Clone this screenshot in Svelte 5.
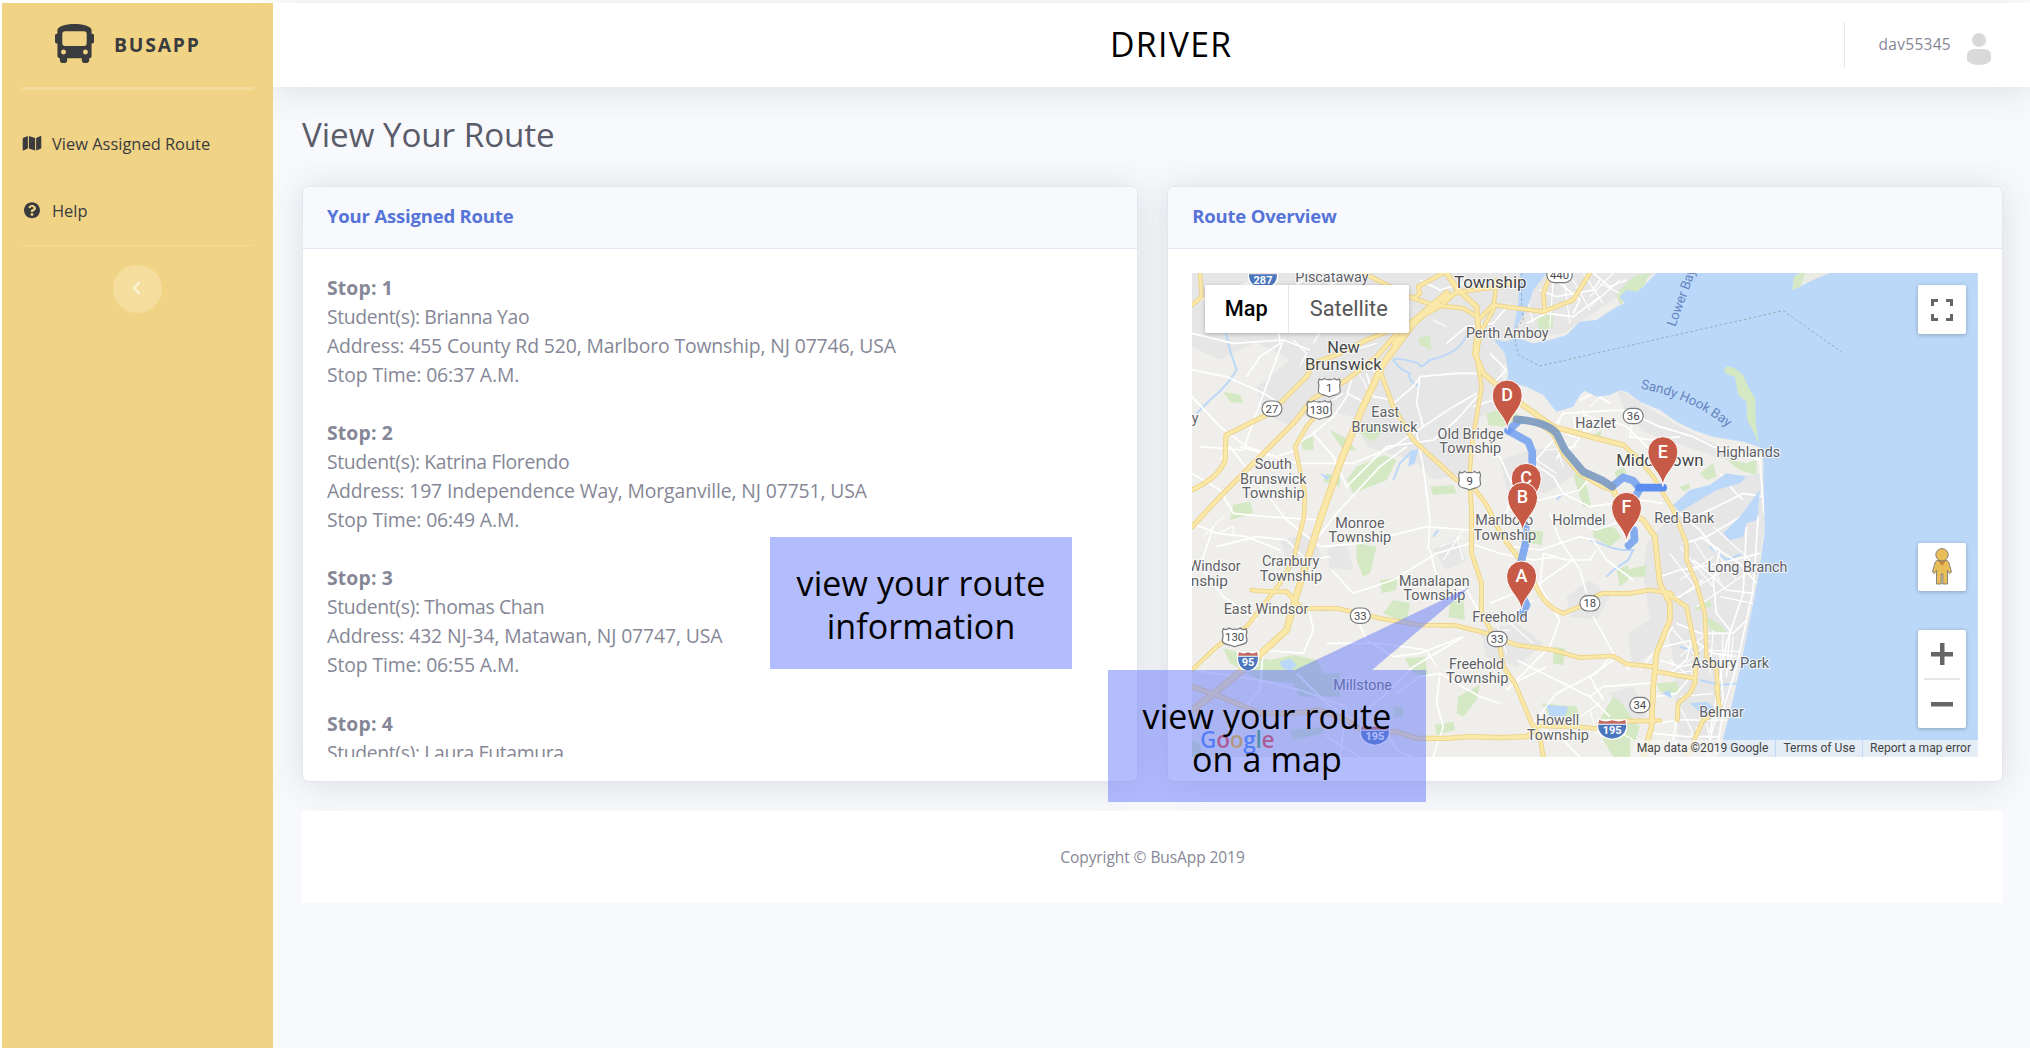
<script>
  const stops = [
    { n: 1, student: 'Brianna Yao', address: '455 County Rd 520, Marlboro Township, NJ 07746, USA', time: '06:37 A.M.' },
    { n: 2, student: 'Katrina Florendo', address: '197 Independence Way, Morganville, NJ 07751, USA', time: '06:49 A.M.' },
    { n: 3, student: 'Thomas Chan', address: '432 NJ-34, Matawan, NJ 07747, USA', time: '06:55 A.M.' },
    { n: 4, student: 'Laura Futamura', address: '', time: '' }
  ];

  // Map drawing uses three units per screen pixel.
  const urban = [
    'M36 39H330L560 39H1430L1300 120 1150 220 1040 240 960 330 1000 440 900 470 860 640 760 660 700 600 560 560 520 470 400 440 340 500 250 460 230 380 330 300 160 210 36 220Z',
    'M36 100 160 130 220 250 120 300 36 260Z',
    'M1310 385 1400 440 1500 500 1620 560 1700 590 1640 600 1520 560 1400 520 1340 470Z',
    'M1560 690 1650 650 1752 640 1752 800 1735 940 1700 1130 1600 1480 1500 1490 1480 1200 1440 960 1400 850 1500 740Z',
    'M1400 850 1460 940 1470 1040 1430 1170 1355 1220 1345 1120 1410 1080 1390 940Z',
    'M960 600 1050 570 1130 560 1190 640 1100 700 980 690Z',
    'M900 1110 1010 1090 1090 1150 1010 1220 920 1190Z',
    'M760 870 830 830 860 900 800 930Z',
    'M440 870 500 850 520 930 450 925Z',
    'M300 840 400 820 430 900 330 930Z',
    'M1160 1010 1230 960 1290 1010 1250 1080 1170 1070Z',
    'M1290 1300 1360 1280 1400 1370 1330 1400Z'
  ];
  const greens = [
    'M715 235 750 225 755 270 720 255Z',
    'M570 490 620 500 580 545 540 520Z',
    'M530 620 610 585 650 600 620 660 520 700 500 660Z',
    'M450 510 490 530 530 570 490 570Z',
    'M920 460 990 440 1020 470 970 500 925 495Z',
    'M750 680 820 675 830 700 760 705Z',
    'M160 735 210 725 220 760 150 780Z',
    'M130 395 180 405 190 430 150 425Z',
    'M360 540 400 530 400 570 370 570Z',
    'M440 640 480 650 480 680 430 665Z',
    'M1070 175 1120 155 1120 200 1080 215Z',
    'M1310 100 1360 50 1410 39 1390 80 1320 135Z',
    'M1180 645 1210 640 1235 740 1210 740Z',
    'M1050 810 1090 815 1085 855 1055 850Z',
    'M530 850 590 860 570 940 550 950 530 900Z',
    'M600 960 650 955 650 990 605 1000Z',
    'M610 1060 640 1020 690 1030 680 1090Z',
    'M810 1030 850 1010 855 1080 805 1070Z',
    'M130 1165 190 1180 270 1200 340 1185 410 1200 430 1240 480 1240 480 1310 360 1310 340 1270 240 1260 150 1210Z',
    'M675 1195 735 1190 745 1250 700 1240Z',
    'M835 1310 900 1275 890 1320 850 1370 830 1360Z',
    'M765 1395 820 1385 825 1410 770 1425Z',
    'M330 1410 430 1400 430 1420 340 1440Z',
    'M640 1340 670 1340 670 1370 640 1370Z',
    'M1085 1330 1190 1340 1200 1370 1110 1370Z',
    'M1120 1160 1155 1165 1150 1215 1120 1210Z',
    'M1260 1380 1300 1310 1325 1330 1360 1380 1380 1400 1350 1490 1300 1490 1270 1440Z',
    'M1240 810 1300 800 1325 830 1290 860 1240 830Z',
    'M1310 930 1345 915 1345 960 1320 980Z',
    'M1340 930 1400 915 1395 950 1350 950Z',
    'M1560 640 1600 610 1610 650 1580 660Z',
    'M1640 600 1700 610 1730 600 1730 645 1680 630Z',
    'M1500 680 1530 670 1530 685 1510 695Z',
    'M1545 1040 1590 1020 1595 1040 1550 1050Z',
    'M1580 1070 1630 1100 1640 1120 1590 1110Z',
    'M1430 1270 1490 1265 1500 1300 1440 1295Z',
    'M1305 635 1330 620 1340 640 1310 655Z',
    'M36 1440 60 1450 70 1491 36 1491Z',
    'M1250 520 1265 510 1262 530 1245 535Z'
  ];
  const inlets = [
    'M1480 735 1530 690 1590 675 1640 640 1700 650 1680 670 1610 690 1560 720 1500 755Z',
    'M1630 820 1680 770 1740 690 1735 760 1730 780 1700 790 1690 830 1650 840Z',
    'M1020 39 1100 39 1060 90 1040 150 1000 215 1015 130Z',
    'M420 1050 440 1045 430 1055Z',
    'M300 1205 330 1195 350 1215 330 1235 305 1220Z',
    'M690 580 715 565 705 610 685 620Z',
    'M1100 1335 1165 1340 1155 1370 1110 1370Z',
    'M1530 1330 1580 1325 1610 1350 1590 1380 1560 1355Z',
    'M1445 1300 1470 1290 1475 1315Z',
    'M420 640 450 650 440 660Z'
  ];
  const streams = [
    'M860 225Q840 280 750 300 720 330 715 310 650 290 640 300 660 330 690 340 680 360 720 380 740 380',
    'M125 130Q135 240 170 330 140 380 90 420L50 460',
    'M700 570 660 610 640 660',
    'M1230 840 1260 850 1300 865 1330 870 1360 870 1345 900 1300 930 1280 950',
    'M1560 1260 1620 1275 1680 1270M1590 860 1640 900 1690 880M1560 1180 1500 1160',
    'M1050 350 1045 345M760 830 775 810M1130 720 1150 700'
  ];
  const minor = [
    'M36 130 120 100 200 70 280 150 350 180M36 220 160 250 310 240 390 270',
    'M310 240 240 430 190 570 60 560M120 600 150 560 320 780 420 860',
    'M36 330 140 350 250 400 300 430M36 410 120 500 200 560 290 590 350 570',
    'M520 340 500 410 460 470 400 520 340 560M560 340 580 410 640 420',
    'M500 400 560 430 520 500M400 520 460 590 500 680 620 560 760 540',
    'M640 430 700 380 720 350 830 340 890 340M720 350 710 430 730 500 820 440 890 400',
    'M710 520 730 620 750 780 745 870M730 500 640 560 520 610 350 610 180 560',
    'M760 540 830 480 900 400M680 560 600 620 470 760 400 850',
    'M36 640 120 690 160 760 260 770 420 780M36 790 110 820 200 830 300 870',
    'M100 800 60 920 130 1010 230 1080M110 860 230 830 320 840 380 900 450 890',
    'M420 860 540 850 620 830 740 800 870 810M455 930 520 1000 640 960 770 880 870 850',
    'M750 870 770 950 860 990 900 1060M870 850 960 880 1060 900 1130 890',
    'M520 1050 560 1140 640 1190 720 1180 850 1130M440 1150 600 1150 740 1170 770 1220',
    'M385 1040 400 1110 370 1180 240 1170M36 1230 240 1260 360 1290 500 1340',
    'M250 1170 240 1290 170 1370 160 1440M350 1240 440 1330 520 1380 610 1310 700 1220 850 1130',
    'M500 1340 480 1491M440 1430 540 1491M650 1300 720 1250 780 1240 900 1310 960 1330',
    'M780 1240 770 1330 790 1400 760 1491M610 1400 650 1470 700 1491',
    'M1000 720 1080 720 1200 690 1240 640M870 560 960 590 1000 680 980 760',
    'M1000 680 1060 610 1120 540 1140 480M1060 610 1120 650 1150 700 1230 740 1300 730 1340 700',
    'M1130 490 1150 460 1240 455 1330 450 1440 500 1540 530 1600 560 1740 600 1752 760',
    'M1200 420 1240 400 1290 430M1210 450 1220 500 1180 560 1130 590M1140 510 1180 530 1260 500',
    'M1290 480 1340 500 1400 560 1470 600M1360 470 1350 530 1410 540 1500 530',
    'M1000 860 1080 870 1200 830 1240 840 1280 900 1360 960M1110 760 1140 840 1200 930 1220 1000',
    'M1170 780 1250 810 1330 780 1380 720 1450 730M1250 870 1230 900 1160 900 1090 880',
    'M1090 880 1080 980 1140 1080 1110 1160 1040 1230 980 1290M930 1030 1080 970 1180 900',
    'M1240 1070 1300 1180 1350 1230M1300 1180 1250 1240 1130 1300 1060 1390',
    'M1010 1200 1130 1260 1230 1310 1290 1370M1230 1310 1270 1280 1400 1270 1430 1270',
    'M980 1290 1020 1260 1100 1220M1060 1390 1150 1440 1200 1491M1300 1200 1230 1250 1270 1320',
    'M1440 950 1500 930 1620 910 1740 880M1500 760 1560 810 1600 860 1680 910 1730 970',
    'M1520 780 1610 740 1690 700 1750 710M1620 640 1660 690 1690 720M1510 850 1580 830 1650 790 1700 760',
    'M1540 900 1600 950 1640 990 1720 1000M1560 830 1620 870 1600 960 1610 1060 1650 1110 1640 1250',
    'M1460 1020 1500 1010 1570 960M1480 1100 1420 1180 1380 1230M1490 1090 1560 1120 1660 1120 1700 1080',
    'M1450 1160 1540 1140 1600 1180 1670 1190M1440 1200 1500 1220 1600 1200 1660 1230',
    'M1550 1230 1490 1300 1430 1310M1460 1250 1520 1200 1540 1120M1620 1180 1630 1320 1600 1400 1580 1490',
    'M1430 1390 1500 1380 1640 1380M1490 1380 1480 1440 1530 1490M1420 1420 1520 1430 1620 1430',
    'M1735 770 1720 990 1670 1220 1630 1350 1610 1480M1700 800 1690 1000 1640 1150 1590 1420',
    'M440 80 500 50M550 100 620 90 690 140M720 60 780 90 850 70M990 130 940 190 860 200 800 250',
    'M1080 90 1130 110 1240 90 1260 60M1130 60 1200 120 1180 160M1240 39 1290 80 1340 60M1040 190 1100 160 1180 170 1260 110',
    'M930 280 980 330 940 370M880 440 940 420 990 430M370 60 330 90M290 160 300 250 240 290 200 350'
  ];
  const local = [
    'M1040 110 1060 190M1120 60 1110 200M1150 39 1170 190M1180 60 1230 150M1210 40 1270 130M1230 140 1320 60M1230 110 1300 39M1260 70 1320 100',
    'M1470 880 1560 1000M1500 860 1600 980M1540 840 1620 960M1570 820 1670 960M1600 800 1710 900M1500 960 1600 890M1520 1000 1650 920M1550 1040 1700 940M1620 1010 1720 1030',
    'M1480 1110 1550 1190M1500 1190 1580 1120M1520 1210 1590 1140M1470 1200 1540 1260M1480 1240 1560 1230M1600 1110 1590 1240M1630 1120 1625 1240M1660 1130 1650 1230M1580 1170 1680 1175M1560 1210 1670 1210',
    'M1500 1310 1600 1300M1500 1340 1540 1420M1530 1420 1600 1470M1550 1400 1550 1480M1580 1390 1590 1440M1440 1440 1500 1480',
    'M1130 560 1150 620M1160 540 1130 600M1180 470 1190 520M1210 460 1250 480M1230 440 1270 400M1100 570 1190 560M1070 600 1130 640',
    'M780 860 850 830M790 900 850 810M830 830 850 900M440 860 510 850M110 820 160 800 160 830M70 830 130 770M900 1120 990 1110M950 1090 980 1180M1000 1060 1060 1020M980 1080 1060 1150',
    'M560 300 600 360M520 310 570 400M430 200 400 250M340 240 380 280 360 320M690 200 740 140M760 180 800 200M590 250 520 270M460 420 490 400',
    'M1240 1280 1270 1310M1200 1370 1260 1330M1230 1350 1250 1420M1310 1410 1360 1440'
  ];
  const highways = [
    { w: 11, d: 'M36 800 130 700 340 490 400 415 500 360 590 290 660 210 800 110' },
    { w: 11, d: 'M36 690Q120 650 135 600L138 525 270 460 380 350 400 310 480 280 560 240 620 215' },
    { w: 9, d: 'M420 450 380 500 345 560 375 700 372 770 340 900 300 970 200 1100 110 1160 36 1230' },
    { w: 17, d: 'M800 100 700 190 610 310 545 450 480 610 420 780 345 1020 320 1110 200 1220 90 1310 36 1350' },
    { w: 10, d: 'M215 990Q240 995 320 995L365 1045 470 1045 600 1075 720 1095 830 1097 920 1120 1010 1155 1120 1170 1200 1193 1300 1188 1340 1212 1420 1220M1430 1235 1545 1255' },
    { w: 10, d: 'M605 345 640 440 700 540 830 660M870 690 875 750 875 880 905 970 905 1060 960 1160 970 1220 1005 1270 1055 1390 1080 1430 1090 1491' },
    { w: 10, d: 'M885 690Q930 740 940 780L975 840 1020 900 1060 960Q1090 1040 1150 1060L1200 1040Q1240 1010 1270 1000L1350 1000 1410 990 1475 1000' },
    { w: 13, d: 'M800 39 830 85 890 140 895 200 885 280 910 340 980 400 1120 500 1250 535 1330 555' },
    { w: 9, d: 'M950 60 940 150 900 220 890 290 905 380 895 440 875 560 868 660' },
    { w: 10, d: 'M550 39 700 115 760 135 850 145 900 175 940 135 1090 155 1180 120 1230 39M1095 155 1090 100 1110 50' },
    { w: 10, d: 'M690 190 760 130 840 95 960 80 1020 60M700 115 720 100 715 80 790 39M640 250 700 180 780 140 830 95' },
    { w: 9, d: 'M36 135 65 110 60 39M1330 555 1370 590 1420 650 1480 750 1500 800 1520 850 1520 900 1550 970 1575 1060 1580 1190 1610 1230 1615 1300' },
    { w: 13, d: 'M995 475Q1080 480 1120 520L1150 580 1200 640 1270 680 1300 690 1330 750 1390 780 1425 830 1440 970 1470 1030 1470 1080 1430 1180 1420 1280 1415 1400 1390 1491' },
    { w: 10, d: 'M1460 1000 1520 1040 1550 1180 1545 1270 1530 1300 1495 1330 1492 1380M1610 1280 1620 1350 1570 1380 1520 1491' },
    { w: 12, d: 'M36 1280 110 1305 240 1360 340 1360 420 1350 500 1380 560 1420 650 1415 710 1435 800 1435 870 1430 960 1433 1040 1430 1065 1410' },
    { w: 10, d: 'M1065 1398 1190 1400 1300 1410M1310 1384 1440 1382' }
  ];
  const labels = [
    ['Piscataway', 456, 67, 220, 42], ['Township', 931, 83, 218, 48], ['Perth Amboy', 982, 234, 248, 43],
    ['New', 491, 280, 98, 48], ['Brunswick', 490, 331, 230, 48], ['East', 616, 472, 84, 43], ['Brunswick', 614, 515, 198, 43],
    ['Old Bridge', 872, 536, 198, 43], ['Township', 871, 580, 186, 43], ['South', 280, 627, 112, 43],
    ['Brunswick', 280, 671, 200, 43], ['Township', 280, 715, 188, 43], ['Monroe', 540, 803, 148, 43],
    ['Township', 540, 846, 188, 43], ['Cranbury', 332, 919, 172, 43], ['Township', 333, 963, 188, 43],
    ['Windsor', 104, 933, 156, 43], ['nship', 88, 977, 112, 43], ['y', 45, 490, 20, 43],
    ['East Windsor', 258, 1062, 254, 43], ['Manalapan', 763, 978, 212, 43], ['Township', 763, 1020, 186, 43],
    ['Freehold', 960, 1087, 166, 43], ['Freehold', 890, 1227, 165, 43], ['Township', 892, 1270, 188, 43],
    ['Millstone', 548, 1291, 176, 43], ['Howell', 1133, 1395, 130, 43], ['Township', 1134, 1440, 186, 43],
    ['Marlboro', 973, 796, 174, 43], ['Township', 975, 839, 188, 43], ['Holmdel', 1197, 795, 160, 43],
    ['Hazlet', 1247, 503, 122, 43], ['Middletown', 1440, 617, 262, 48], ['Highlands', 1705, 591, 192, 43],
    ['Red Bank', 1513, 788, 180, 43], ['Long Branch', 1703, 936, 240, 43], ['Asbury Park', 1652, 1225, 232, 43],
    ['Belmar', 1625, 1371, 134, 43]
  ];
  const ovals = [
    [27, 276, 446], [36, 1360, 468], [33, 541, 1067], [33, 952, 1137], [18, 1230, 1030], [34, 1380, 1335], [440, 1139, 45]
  ];
  const usRoutes = [[1, 448, 383], [130, 418, 450], [9, 869, 662], [130, 164, 1132]];
  const interstates = [[287, 249, 57, 84], [95, 204, 1204, 60], [195, 585, 1426, 84], [195, 1297, 1408, 84]];
  const pins = [
    ['C', 1039, 655, 760], ['D', 982, 405, 508], ['B', 1028, 712, 815], ['A', 1025, 948, 1052], ['E', 1449, 575, 679], ['F', 1340, 742, 847]
  ];
  const logo = [['G', '#4285f4'], ['o', '#ea4335'], ['o', '#fbbc05'], ['g', '#4285f4'], ['l', '#34a853'], ['e', '#ea4335']];
</script>

<div class="app">
  <aside class="sidebar">
    <div class="brand">
      <svg class="bus" viewBox="0 0 512 512"><path d="M488 128h-8V80c0-44.8-99.2-80-224-80S32 35.2 32 80v48h-8c-13.25 0-24 10.74-24 24v80c0 13.25 10.75 24 24 24h8v160c0 17.67 14.33 32 32 32v32c0 17.67 14.33 32 32 32h32c17.67 0 32-14.33 32-32v-32h192v32c0 17.67 14.33 32 32 32h32c17.67 0 32-14.33 32-32v-32h6.4c16 0 25.6-12.8 25.6-25.6V256h8c13.25 0 24-10.75 24-24v-80c0-13.26-10.75-24-24-24zM112 400c-17.67 0-32-14.33-32-32s14.33-32 32-32 32 14.33 32 32-14.33 32-32 32zm16-112c-17.67 0-32-14.33-32-32V128c0-17.67 14.33-32 32-32h256c17.67 0 32 14.33 32 32v128c0 17.67-14.33 32-32 32H128zm272 112c-17.67 0-32-14.33-32-32s14.33-32 32-32 32 14.33 32 32-14.33 32-32 32z" /></svg>
      <span>BUSAPP</span>
    </div>
    <hr class="thick" />
    <nav>
      <a class="item">
        <svg class="ico" viewBox="0 0 576 512"><path d="M0 117.66v346.32c0 11.32 11.43 19.06 21.94 14.86L160 416V32L20.12 87.95A32.006 32.006 0 0 0 0 117.66zM192 416l192 64V96L192 32v384zM554.06 33.16L416 96v384l139.88-55.95A31.996 31.996 0 0 0 576 394.34V48.02c0-11.32-11.43-19.06-21.94-14.86z" /></svg>
        <span>View Assigned Route</span>
      </a>
      <a class="item">
        <svg class="ico" viewBox="0 0 512 512"><path d="M504 256c0 136.997-111.043 248-248 248S8 392.997 8 256C8 119.083 119.043 8 256 8s248 111.083 248 248zM262.655 90c-54.497 0-89.255 22.957-116.549 63.758-3.536 5.286-2.353 12.415 2.715 16.258l34.699 26.31c5.205 3.947 12.621 3.008 16.665-2.122 17.864-22.658 30.113-35.797 57.303-35.797 20.429 0 45.698 13.148 45.698 32.958 0 14.976-12.363 22.667-32.534 33.976C247.128 238.528 216 254.941 216 296v4c0 6.627 5.373 12 12 12h56c6.627 0 12-5.373 12-12v-1.333c0-28.462 83.186-29.647 83.186-106.667 0-58.002-60.165-102-116.531-102zM256 338c-25.365 0-46 20.635-46 46 0 25.364 20.635 46 46 46s46-20.636 46-46c0-25.364-20.635-46-46-46z" /></svg>
        <span>Help</span>
      </a>
    </nav>
    <hr class="thin" />
    <button class="collapse" aria-label="Collapse sidebar">
      <svg viewBox="0 0 10 14"><path d="M7.7 2.2 2.8 7l4.9 4.8" /></svg>
    </button>
  </aside>

  <div class="main">
    <header class="topbar">
      <div class="role">DRIVER</div>
      <div class="user">
        <span>dav55345</span>
        <svg viewBox="0 0 24 32"><circle cx="12" cy="7" r="7" /><path d="M0 22.5C0 18 4 16 8 16h8c4 0 8 2 8 6.500v5C21 30.500 17 32 12 32S3 30.500 0 27.500z" /></svg>
      </div>
    </header>

    <div class="content">
      <h1>View Your Route</h1>
      <div class="cards">
        <section class="card">
          <h2>Your Assigned Route</h2>
          <div class="body">
            <div class="stops">
              {#each stops as s}
                <div class="stop">
                  <strong>Stop: {s.n}</strong>
                  <div class="student">Student(s): {s.student}</div>
                  {#if s.address}
                    <div>Address: {s.address}</div>
                    <div>Stop Time: {s.time}</div>
                  {/if}
                </div>
              {/each}
            </div>
          </div>
        </section>

        <section class="card">
          <h2>Route Overview</h2>
          <div class="body">
            <div class="map">
              <svg class="canvas" viewBox="36 39 2358 1452" preserveAspectRatio="none">
                <rect x="36" y="39" width="2358" height="1452" fill="#efeeea" />
                {#each urban as d}<path {d} fill="#e6e6e6" />{/each}
                {#each greens as d}<path {d} fill="#d3e8c3" />{/each}
                {#each streams as d}<path {d} class="stream" />{/each}
                {#each minor as d}<path {d} class="minor" />{/each}
                {#each local as d}<path {d} class="local" />{/each}
                {#each inlets as d}<path {d} fill="#bbd8f8" />{/each}
                <path fill="#bbd8f8" d="M1430 39 1390 80 1370 95 1340 90 1320 110 1335 130 1310 140 1250 180 1200 185 1160 225 1110 240 1060 250 1030 240 1005 235 980 245 940 238 975 280 985 340 980 365 1040 380 1090 405 1130 455 1180 440 1200 405 1215 392 1250 410 1290 405 1320 391 1340 395 1380 425 1440 450 1490 485 1540 510 1600 530 1690 545 1740 562 1750 600 1754 780 1754 820 1737 940 1722 1020 1682 1220 1652 1350 1615 1491H2394V39Z" />
                <path fill="#e9ebe4" d="M1838 90 1842 50 1860 39H1950L1900 60Z" />
                <path fill="#d3e8c3" d="M1838 90 1842 50 1862 39H1875L1862 80Z" />
                <path fill="#d3e8c3" d="M1632 330 1642 318 1665 325 1690 345 1705 380 1726 415 1728 490 1738 560 1724 520 1702 480 1700 425 1675 405 1665 350 1640 342Z" />
                <path d="M1025 39V130L1030 180 1000 215 1015 285 1080 318 1810 152 1985 276" class="ferry" />
                {#each highways as h}<path d={h.d} class="case" stroke-width={h.w + 4} />{/each}
                {#each highways as h}<path d={h.d} class="road" stroke-width={h.w - 1} />{/each}

                <path class="route" d="M985 512 1045 545 1057 575V640L1030 720M1037 800V850L1025 900 1018 990 1040 1035 1026 1062" />
                <path class="route" d="M985 512 1020 480M1300 677 1330 652 1360 662 1378 683M1378 690 1360 720M1362 810 1364 840 1346 856" />
                <path class="route dim" d="M1010 478Q1100 485 1130 520L1155 570 1210 635 1265 660 1297 680" />
                <path class="route strong" d="M1378 683H1450" />

                {#each ovals as [n, x, y]}
                  <rect x={x - (n > 99 ? 38 : 30)} y={y - 23} width={n > 99 ? 76 : 60} height="46" rx="23" class="sign" />
                  <text {x} y={y + 12} class="num">{n}</text>
                {/each}
                {#each usRoutes as [n, x, y]}
                  <g transform="translate({x} {y})">
                    <path class="sign" transform="scale({n > 99 ? 1.12 : 1} 1)" d="M-30-26Q-22-20-15-28-8-22 0-25 8-22 15-28 22-20 30-26L33-17C28-4 33 2 33 10 31 24 14 20 0 28-14 20-31 24-33 10-33 2-28-4-33-17Z" />
                    <text y="12" class="num">{n}</text>
                  </g>
                {/each}
                {#each interstates as [n, x, y, w]}
                  <g transform="translate({x} {y})">
                    <path fill="#fff" d="M{-w / 2 - 3}-30H{w / 2 + 3}V0Q{w / 2} 26 0 32 {-w / 2} 26 {-w / 2 - 3} 0Z" />
                    <path fill="#4a76bd" d="M{-w / 2}-14H{w / 2}Q{w / 2 + 1} 22 0 28 {-w / 2 - 1} 22 {-w / 2}-14Z" />
                    <path fill="#c26a62" d="M{-w / 2 + 3}-28Q{-w / 4}-20 0-27 {w / 4}-20 {w / 2 - 3}-28L{w / 2}-17H{-w / 2}Z" />
                    <text y="14" class="inter">{n}</text>
                  </g>
                {/each}

                {#each labels as [t, x, y, w, size]}
                  <text {x} {y} class="label" class:city={size === 48} font-size={size} textLength={w} lengthAdjust="spacingAndGlyphs">{t}</text>
                {/each}
                <text class="bay" transform="translate(1486 202) rotate(-70)" textLength="182">Lower Bay</text>
                <path id="bay" d="M1382 386Q1532 413 1644 503" fill="none" />
                <text class="bay"><textPath href="#bay">Sandy Hook Bay</textPath></text>

                {#each pins as [t, x, y, tip]}
                  <path class="pin" d="M{x} {tip}C{x - 3} {y + 62} {x - 45} {y + 45} {x - 45} {y}A45 45 0 0 1 {x + 45} {y}C{x + 45} {y + 45} {x + 3} {y + 62} {x} {tip}Z" />
                  <text {x} y={y + 18} class="pinletter">{t}</text>
                {/each}
                <text x="60" y="1463" class="google" textLength="224">{#each logo as [c, f]}<tspan fill={f}>{c}</tspan>{/each}</text>
              </svg>

              <div class="types"><b>Map</b><span>Satellite</span></div>
              <div class="ctl full">
                <svg viewBox="0 0 22 22"><path d="M1.500 7V1.500H7M15 1.500h5.500V7M20.500 15v5.500H15M7 20.500H1.500V15" /></svg>
              </div>
              <div class="side">
                <div class="ctl peg">
                  <svg viewBox="0 0 20 37"><path d="M5 12.500h10l1.700 1.500L19.500 24l-1.800 1.600-2.200-3.200V36H10.800V26H9.200V36H4.500V22.400L2.300 25.600.5 24 3.300 14Z" fill="#e9bd57" stroke="#777" stroke-width=".9" /><path d="M6 12.500h8L10 18Z" fill="#c98444" /><circle cx="10" cy="6.800" r="6.200" fill="#e9bd57" stroke="#777" stroke-width=".9" /></svg>
                </div>
                <div class="zoom"><i class="plus"></i><hr /><i></i></div>
              </div>
              <div class="attrib"><span>Map data ©2019 Google</span><span>Terms of Use</span><span>Report a map error</span></div>
            </div>
          </div>
        </section>
      </div>
      <footer>Copyright © BusApp 2019</footer>
    </div>
  </div>

  <svg class="pointer" viewBox="0 0 175 83"><path d="M175 0 0 83H77Z" /></svg>
  <div class="note info">view your route<br />information</div>
  <div class="note onmap">view your route<br />on a map</div>
</div>

<style>
  :global(body) { background: #fff; overflow: hidden; }
  .app {
    position: relative; display: flex; width: 2030px; height: 1048px; box-sizing: border-box;
    padding: 3px 0 0 2px; overflow: hidden;
    font: 19.36px/29.04px 'Open Sans', 'Noto Sans', sans-serif; letter-spacing: -0.12px; color: #858796;
  }
  .sidebar { position: relative; z-index: 1; width: 271px; flex: none; background: #f0d385; color: #3a3b3d; display: flex; flex-direction: column; align-items: center; }
  .brand { display: flex; align-items: center; gap: 20px; height: 84px; align-self: stretch; padding: 0 0 3px 53px; box-sizing: border-box; font-weight: 700; font-size: 19.360px; letter-spacing: 1.800px; }
  .brand span { padding-top: 2px; }
  .bus { width: 39px; height: 39px; fill: currentColor; }
  hr { border: 0; margin: 0; width: 232px; background: #f3dc9b; }
  .thick { height: 2.500px; margin-left: 1px; }
  .thin { height: 1px; margin-top: 19.500px; }
  nav { align-self: stretch; padding: 39px 0 0 20px; display: flex; flex-direction: column; gap: 38.500px; }
  .item { display: flex; align-items: center; gap: 10px; font-size: 16.460px; letter-spacing: 0; }
  .ico { width: 20px; height: 16.500px; fill: currentColor; }
  .collapse { margin-top: 19.500px; width: 48.400px; height: 48.400px; padding: 0; border: 0; border-radius: 50%; background: #f4dd9d; display: grid; place-items: center; }
  .collapse svg { width: 10px; height: 14px; margin: 0 2px 2px 0; fill: none; stroke: #faefcf; stroke-width: 3; stroke-linecap: round; stroke-linejoin: round; }

  .main { flex: 1; display: flex; flex-direction: column; background: #f8f9fd; }
  .topbar { height: 84.400px; flex: none; background: #fff; box-shadow: 0 2.900px 33.900px rgba(58, 59, 69, 0.15); display: flex; align-items: center; justify-content: space-between; position: relative; }
  .role { margin: -3px 0 0 837px; color: #000; font-size: 33.800px; line-height: 46px; letter-spacing: 1.300px; }
  .user { display: flex; align-items: center; height: 46px; border-left: 1px solid #e3e6f0; padding: 0 39px 0 34px; font-size: 15.490px; letter-spacing: 0.290px; }
  .user span { margin-bottom: 1px; }
  .user svg { width: 24px; height: 32px; margin: 7px 0 0 16px; fill: #d9d9d9; }

  .content { padding: 27.600px 27px 0 29px; }
  h1 { margin: 0; font-weight: 400; font-size: 33.200px; line-height: 40.700px; letter-spacing: -0.050px; color: #5a5c69; }
  .cards { display: flex; gap: 29.500px; margin-top: 30px; }
  .card { flex: 1; background: #fff; border: 1px solid #e3e6f0; border-radius: 7px; box-sizing: border-box; height: 596px; box-shadow: 0 2.900px 33.900px rgba(58, 59, 69, 0.15); overflow: clip; }
  .card h2 { margin: 0; height: 62px; box-sizing: border-box; padding: 14px 24px 0; background: #f8f9fd; border-bottom: 1px solid #e3e6f0; color: #5674d8; font-weight: 700; font-size: 18.500px; line-height: 29px; letter-spacing: -0.190px; }
  .body { padding: 24.200px 24px 0; }
  .stops { height: 484px; overflow: hidden; }
  .stop { margin-bottom: 29.040px; }
  .student { letter-spacing: -0.360px; }
  strong { letter-spacing: 0.150px; }
  footer { height: 92px; margin-top: 29.500px; background: #fff; display: grid; place-items: center; font-size: 15.490px; letter-spacing: -0.070px; position: relative; }

  .map { position: relative; height: 484px; overflow: hidden; font-family: Roboto, sans-serif; letter-spacing: 0; }
  .canvas { display: block; width: 100%; height: 100%; font-family: Roboto, sans-serif; }
  .canvas text { text-anchor: middle; }
  .stream { fill: none; stroke: #bbd8f8; stroke-width: 6; }
  .minor { fill: none; stroke: #fff; stroke-width: 5; stroke-linejoin: round; }
  .local { fill: none; stroke: #fff; stroke-width: 3.500; }
  .case { fill: none; stroke: #ecd083; stroke-linejoin: round; stroke-linecap: round; }
  .road { fill: none; stroke: #fae8a9; stroke-linejoin: round; stroke-linecap: round; }
  .ferry { fill: none; stroke: #93a0ad; stroke-width: 2.500; stroke-dasharray: 8 7; }
  .route { fill: none; stroke: #6a9af0; stroke-width: 23; stroke-linejoin: round; stroke-linecap: round; opacity: 0.800; }
  .dim { stroke: #7f9dc2; opacity: 0.950; }
  .strong { stroke: #5b8def; opacity: 1; }
  .sign { fill: #fff; stroke: #77797c; stroke-width: 3.500; }
  .num { font-size: 34px; fill: #47494c; }
  .inter { font-size: 33px; font-weight: 700; fill: #fff; }
  .label { fill: #5d6064; stroke: #fff; stroke-width: 6; stroke-opacity: 0.800; paint-order: stroke; stroke-linejoin: round; }
  .city { fill: #434547; }
  .canvas .bay { font-size: 40px; fill: #6685c1; text-anchor: start; }
  .pin { fill: #c75a46; stroke: #fff; stroke-width: 3; }
  .pinletter { font-size: 54px; font-weight: 500; fill: #fff; }
  .canvas .google { font: 600 68px 'Open Sans', sans-serif; text-anchor: start; stroke: #fff; stroke-width: 5; stroke-opacity: 0.600; paint-order: stroke; }

  .types { position: absolute; left: 12.500px; top: 12.500px; height: 48px; display: flex; background: #fff; border-radius: 2px; box-shadow: 0 1px 4px rgba(0, 0, 0, 0.250); font-size: 21.780px; line-height: 48px; color: #565656; }
  .types b { width: 83px; text-align: center; font-weight: 500; color: #000; border-right: 1px solid #e6e6e6; }
  .types span { width: 120px; text-align: center; }
  .ctl { width: 48.400px; height: 48.400px; background: #fff; border-radius: 2px; box-shadow: 0 1px 4px rgba(0, 0, 0, 0.250); display: grid; place-items: center; }
  .full { position: absolute; right: 12px; top: 12.500px; }
  .full svg { width: 22px; height: 22px; fill: none; stroke: #666; stroke-width: 3; }
  .side { position: absolute; right: 12px; bottom: 29px; display: flex; flex-direction: column; gap: 38.700px; }
  .peg svg { width: 20px; height: 37px; }
  .zoom { width: 48.400px; height: 98px; background: #fff; border-radius: 2px; box-shadow: 0 1px 4px rgba(0, 0, 0, 0.250); display: flex; flex-direction: column; align-items: center; justify-content: space-between; }
  .zoom hr { width: 36px; height: 1.500px; background: #e6e6e6; }
  .zoom i { width: 22px; height: 48px; background: linear-gradient(#666, #666) center / 22px 4.500px no-repeat; }
  .zoom .plus { background: linear-gradient(#666, #666) center / 22px 4.500px no-repeat, linear-gradient(#666, #666) center / 4.500px 22px no-repeat; }
  .attrib { position: absolute; right: 0; bottom: 0; display: flex; gap: 1px; font-size: 12.100px; line-height: 17px; color: #444; }
  .attrib span { background: rgba(245, 245, 245, 0.700); padding: 0 7px; white-space: nowrap; }

  .note { position: absolute; display: grid; place-content: center; text-align: center; box-sizing: border-box; height: 132px; padding-top: 3px; background: rgba(103, 121, 249, 0.500); color: #000; font-size: 34px; line-height: 43px; letter-spacing: 0.100px; }
  .info { left: 770px; top: 537px; width: 302px; }
  .onmap { left: 1108px; top: 670px; width: 318px; }
  .pointer { position: absolute; left: 1295px; top: 587px; width: 175px; height: 83px; fill: rgba(103, 121, 249, 0.500); }
</style>
